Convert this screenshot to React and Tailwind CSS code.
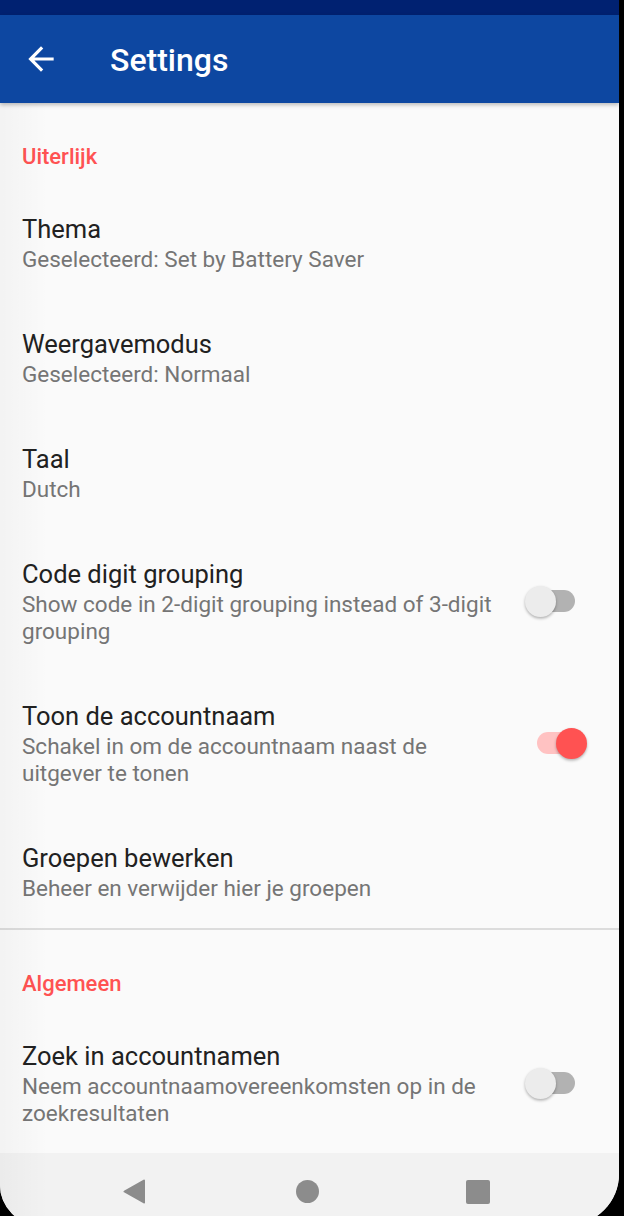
import React from "react";

// Material toggle, as drawn by Android's SwitchCompat
const Toggle = ({ on }) => (
  <div
    className={`relative w-[38px] h-[22px] rounded-full ${
      on ? "bg-[#ffc2c2]" : "bg-[#b2b2b2]"
    }`}
  >
    <div
      className={`absolute top-[-4.5px] w-[31px] h-[31px] rounded-full shadow-[0_1.5px_3px_rgba(0,0,0,0.3)] ${
        on ? "right-[-12px] bg-[#ff5252]" : "left-[-12.5px] bg-[#ececec]"
      }`}
    />
  </div>
);

const Category = ({ label }) => (
  <div className="pl-[22px] pt-[41px] pb-[14px]">
    <div className="text-[22px] leading-[26px] font-medium text-[#ff5252]">
      {label}
    </div>
  </div>
);

const PrefItem = ({ title, summary, toggle }) => (
  <div className="flex items-center pl-[22px] pt-[28px] pb-[26px]">
    <div className="flex-1 min-w-0">
      <div className="text-[25.5px] leading-[34px] text-[#212121]">{title}</div>
      <div className="text-[22.5px] leading-[27px] text-[#757575]">
        {summary}
      </div>
    </div>
    <div className="w-[114px] shrink-0 pl-[32px] flex items-center">
      {toggle !== undefined && <Toggle on={toggle} />}
    </div>
  </div>
);

const App = () => {
  return (
    <div className="relative w-[624px] h-[1216px] overflow-hidden bg-black font-['Roboto',sans-serif]">
      <div className="relative w-[619px] h-[1225px] overflow-hidden bg-[#fafafa] rounded-bl-[40px] rounded-br-[51px] flex flex-col">
        {/* --- STATUS BAR --- */}
        <div className="h-[15px] bg-[#002171]" />

        {/* --- APP BAR --- */}
        <div className="relative z-10 h-[88px] bg-[#0d47a1] flex items-center pl-[22px] shadow-[0_2px_4px_rgba(0,0,0,0.25)]">
          <svg viewBox="0 0 24 24" className="w-[38px] h-[38px]" fill="#ffffff">
            <path d="M20 11H7.83l5.59-5.59L12 4l-8 8 8 8 1.41-1.41L7.83 13H20v-2z" />
          </svg>
          <div className="ml-[50px] pt-[2px] text-[32px] leading-[38px] font-medium text-white">
            Settings
          </div>
        </div>

        {/* --- PREFERENCES --- */}
        <div>
          <Category label="Uiterlijk" />
          <PrefItem title="Thema" summary="Geselecteerd: Set by Battery Saver" />
          <PrefItem title="Weergavemodus" summary="Geselecteerd: Normaal" />
          <PrefItem title="Taal" summary="Dutch" />
          <PrefItem
            title="Code digit grouping"
            summary="Show code in 2-digit grouping instead of 3-digit grouping"
            toggle={false}
          />
          <PrefItem
            title="Toon de accountnaam"
            summary="Schakel in om de accountnaam naast de uitgever te tonen"
            toggle={true}
          />
          <PrefItem
            title="Groepen bewerken"
            summary="Beheer en verwijder hier je groepen"
          />
          <div className="h-[2px] bg-[#dcdcdc]" />
          <Category label="Algemeen" />
          <PrefItem
            title="Zoek in accountnamen"
            summary="Neem accountnaamovereenkomsten op in de zoekresultaten"
            toggle={false}
          />
        </div>

        {/* --- NAVIGATION BAR --- */}
        <div className="flex-1 bg-[#f2f2f2]">
          <div className="mt-[26px] h-[25px] flex items-center pl-[123px]">
            <svg viewBox="0 0 22 25" className="w-[22px] h-[25px]">
              <path
                d="M21 1.5 L1.5 12.5 L21 23.5 Z"
                fill="#8c8c8c"
                stroke="#8c8c8c"
                strokeWidth="2"
                strokeLinejoin="round"
              />
            </svg>
            <div className="ml-[151px] w-[23px] h-[23px] rounded-full bg-[#8c8c8c]" />
            <div className="ml-[147px] w-[24px] h-[24px] rounded-[2px] bg-[#8c8c8c]" />
          </div>
        </div>

        {/* soft shading along the left edge of the screen */}
        <div className="pointer-events-none absolute left-0 top-[103px] bottom-0 w-[48px] bg-gradient-to-r from-black/[0.03] to-transparent" />
      </div>
    </div>
  );
};

export default App;
